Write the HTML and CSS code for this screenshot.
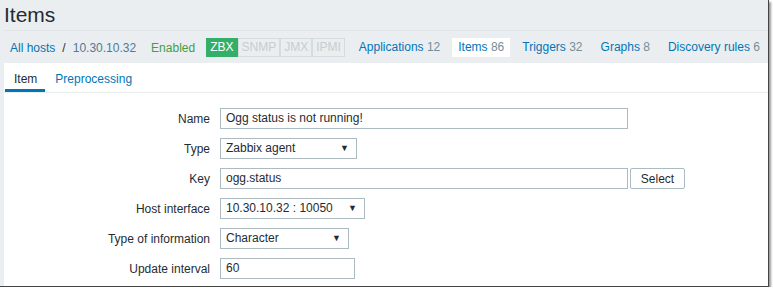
FILE: index.html
```html
<!DOCTYPE html>
<html lang="en">
<head>
    <meta charset="UTF-8">
    <title>Items</title>
    <link rel="stylesheet" href="styles.css">
</head>
<body>
    <div class="shot">
        <div class="header">
            <h1>Items</h1>
        </div>
        <div class="nav">
            <a class="link first">All hosts</a>
            <span class="sep">/</span>
            <a class="link host">10.30.10.32</a>
            <span class="enabled">Enabled</span>
            <div class="badges">
                <span class="badge on">ZBX</span>
                <span class="badge">SNMP</span>
                <span class="badge">JMX</span>
                <span class="badge">IPMI</span>
            </div>
            <a class="link tab apps">Applications <span class="num">12</span></a>
            <a class="link tab current">Items <span class="num">86</span></a>
            <a class="link tab">Triggers <span class="num">32</span></a>
            <a class="link tab">Graphs <span class="num">8</span></a>
            <a class="link tab">Discovery rules <span class="num">6</span></a>
        </div>
        <div class="panel">
            <div class="tabs">
                <span class="tabitem active">Item</span>
                <span class="tabitem">Preprocessing</span>
            </div>
            <div class="form">
                <label>Name</label>
                <div class="field"><div class="input w-name">Ogg status is not running!</div></div>

                <label>Type</label>
                <div class="field"><div class="select w-type">Zabbix agent<span class="arrow">&#9660;</span></div></div>

                <label>Key</label>
                <div class="field"><div class="input w-name">ogg.status</div><button class="btn">Select</button></div>

                <label>Host interface</label>
                <div class="field"><div class="select w-host">10.30.10.32 : 10050<span class="arrow">&#9660;</span></div></div>

                <label>Type of information</label>
                <div class="field"><div class="select w-info">Character<span class="arrow">&#9660;</span></div></div>

                <label>Update interval</label>
                <div class="field"><div class="input w-upd">60</div></div>
            </div>
        </div>
    </div>
</body>
</html>
```

FILE: styles.css
```css
body {
    margin: 0;
    background: #ffffff;
    font-family: "Liberation Sans", Arial, sans-serif;
    font-size: 12px;
    color: #1f2c33;
}
.shot {
    width: 768px;
    height: 286px;
    background: #ebeef0;
    border-right: 1px solid #444;
    border-bottom: 1px solid #444;
    box-shadow: 2px 2px 2px #9a9a9a;
    overflow: hidden;
}
.header {
    margin-left: 4px;
    height: 30px;
    border-bottom: 1px solid #dfe4e7;
}
h1 {
    margin: 0;
    padding-top: 3px;
    font-size: 21px;
    font-weight: normal;
    line-height: 24px;
}
.nav {
    display: flex;
    align-items: center;
    height: 33px;
    padding-left: 10px;
    white-space: nowrap;
}
.nav > * {
    flex-shrink: 0;
}
.link {
    color: #0275b8;
}
.sep {
    margin: 0 7px 0 7px;
}
.host {
    color: #4f7a99;
}
.enabled {
    color: #429e47;
    margin-left: 15px;
}
.badges {
    display: flex;
    margin-left: 11px;
}
.badge {
    border: 1px solid #d5dbdf;
    color: #c5cdd2;
    padding: 1px 3px;
    line-height: 15px;
    font-size: 12px;
}
.badge.on {
    background: #34af67;
    border-color: #34af67;
    color: #ffffff;
}
.num {
    color: #768d99;
}
.tab {
    margin-left: 6px;
    padding: 3px 6px;
    line-height: 13px;
}
.tab.apps {
    margin-left: 8px;
}
.current {
    background: #ffffff;
}
.panel {
    margin-left: 4px;
    margin-top: -1px;
    background: #ffffff;
    height: 300px;
}
.tabs {
    display: flex;
    height: 29px;
    border-bottom: 1px solid #ebeef0;
}
.tabitem {
    padding: 9px 10px 0 10px;
    color: #0275b8;
}
.tabitem.active {
    color: #1f2c33;
    padding: 9px 8px 0 9px;
    margin-left: 1px;
    border-bottom: 3px solid #0275b8;
}
.form {
    display: grid;
    grid-template-columns: 216px auto;
    row-gap: 9px;
    padding-top: 15px;
    align-items: center;
}
label {
    text-align: right;
    padding-right: 10px;
}
.field {
    display: flex;
}
.input, .select {
    height: 19px;
    line-height: 19px;
    border: 1px solid #acbbc2;
    padding: 0 5px;
    box-sizing: content-box;
    white-space: nowrap;
}
.select {
    display: flex;
    justify-content: space-between;
}
.arrow {
    font-size: 9px;
    margin-right: 2px;
}
.w-name {
    width: 396px;
}
.w-type {
    width: 125px;
}
.w-host {
    width: 133px;
}
.w-info {
    width: 117px;
}
.w-upd {
    width: 123px;
}
.btn {
    margin-left: 2px;
    height: 21px;
    width: 55px;
    background: #ffffff;
    border: 1px solid #acbbc2;
    border-radius: 2px;
    font-family: "Liberation Sans", Arial, sans-serif;
    font-size: 12px;
    color: #1f2c33;
    padding: 0;
}
```
